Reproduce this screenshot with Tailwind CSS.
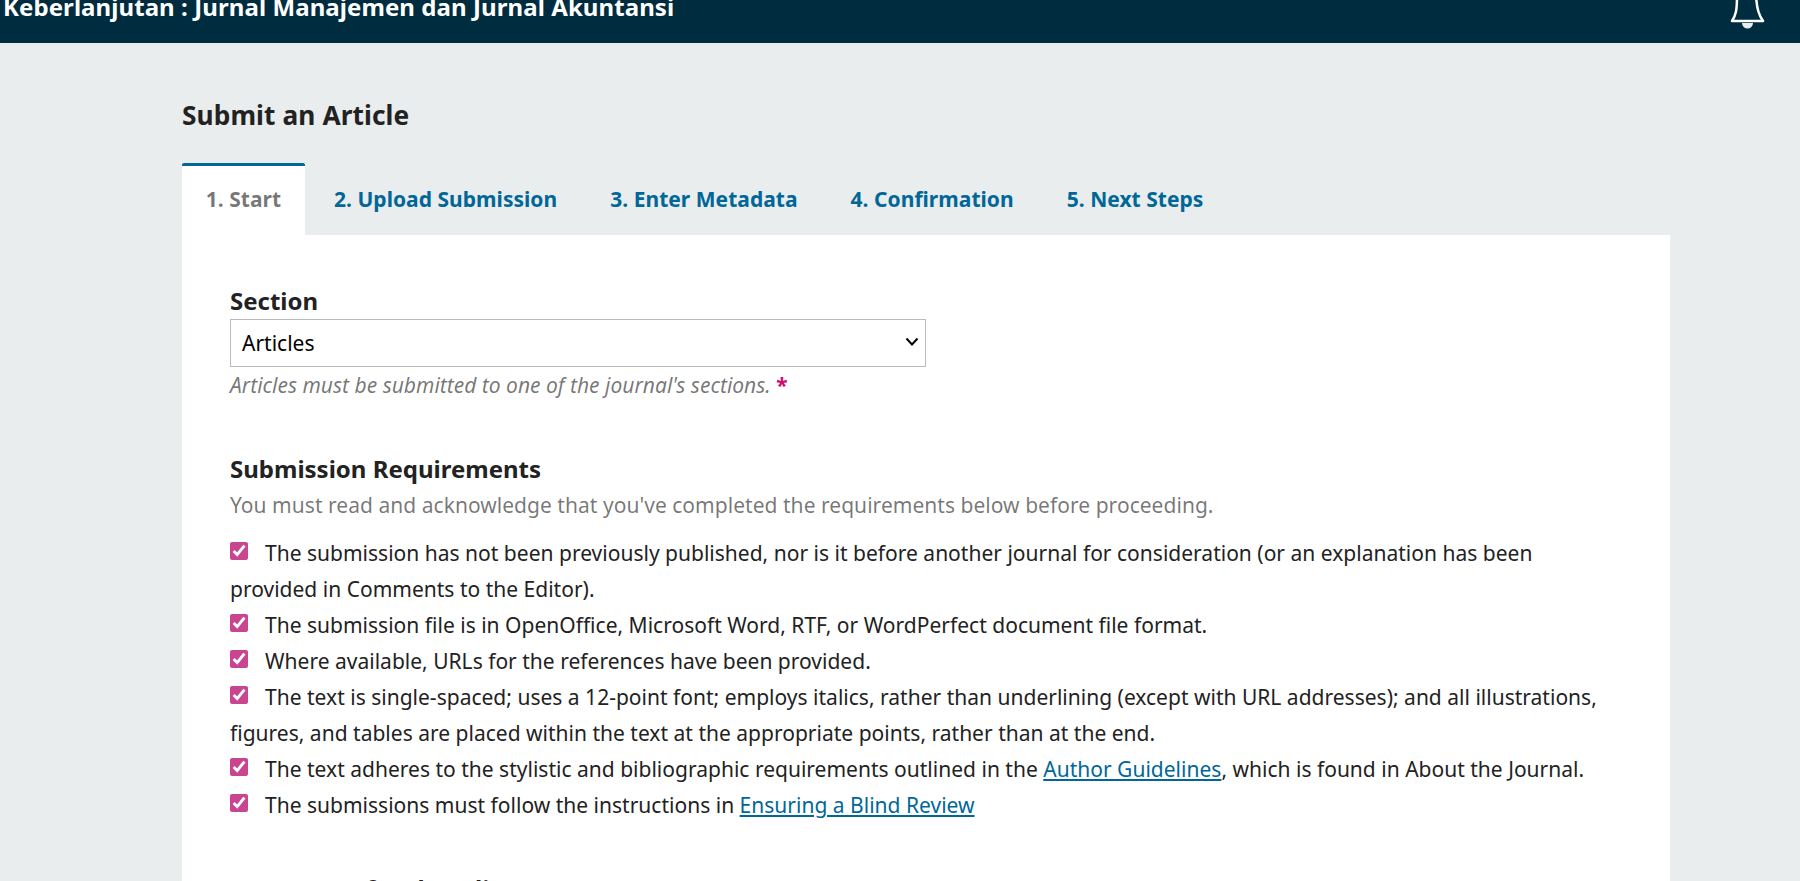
<!DOCTYPE html>
<html lang="en">
<head>
    <meta charset="UTF-8">
    <title>Submit an Article</title>
    <script src="https://cdn.jsdelivr.net/npm/@tailwindcss/browser@4"></script>
</head>
<body class="bg-[#e9edee] font-['Noto_Sans',sans-serif] text-[21px] leading-[36px] text-[#222222] h-[881px] overflow-hidden">
    <!-- Header -->
    <header class="bg-[#002c40] h-[43px] flex justify-between pl-[3px] pr-[33px] overflow-hidden">
        <div class="font-bold text-white text-[24px] leading-[24px] tracking-[0.08px] -mt-[5px]">Keberlanjutan : Jurnal Manajemen dan Jurnal Akuntansi</div>
        <svg class="w-[38px] h-[30px]" viewBox="0 0 38 30" fill="none" stroke="white" stroke-width="2.5" stroke-linejoin="round">
            <path d="M8 -4 C8 10 7 15 3 21 H34 C30 15 28 10 27 -4"/>
            <path d="M13 23 a5 5 0 0 0 11 0 z" fill="#e8eef0" stroke="none"/>
        </svg>
    </header>

    <main class="pl-[182px] pr-[130px]">
        <h1 class="font-bold text-[26.25px] leading-[36px] tracking-[0.1px] pt-[54px] pb-[30px]">Submit an Article</h1>

        <!-- Tabs -->
        <nav class="flex font-bold text-[21px] leading-[24px] tracking-[0.03px]">
            <a class="bg-white border-t-[3px] border-[#006798] rounded-t-[2px] h-[72px] w-[123px] pb-[4px] flex items-center justify-center text-[rgba(0,0,0,0.54)]">1. Start</a>
            <a class="text-[#006798] h-[72px] flex items-center pb-[1px] ml-[29px]">2. Upload Submission</a>
            <a class="text-[#006798] h-[72px] flex items-center pb-[1px] ml-[53px]">3. Enter Metadata</a>
            <a class="text-[#006798] h-[72px] flex items-center pb-[1px] ml-[53px]">4. Confirmation</a>
            <a class="text-[#006798] h-[72px] flex items-center pb-[1px] ml-[53px]">5. Next Steps</a>
        </nav>

        <div class="bg-white px-[48px] pt-[48px] h-[800px]">
            <!-- Section -->
            <label class="block font-bold text-[24px] leading-[36px] h-[36px]">Section</label>
            <div class="relative w-[696px] h-[48px] bg-white border border-[#bbbbbb] flex items-center pl-[11px] text-black">
                Articles
                <svg class="absolute right-[6px] top-[15px] w-[14px] h-[14px]" viewBox="0 0 14 14" fill="none" stroke="black" stroke-width="2"><path d="M1.5 3.5 L7 9.5 L12.5 3.5"/></svg>
            </div>
            <p class="italic text-[rgba(0,0,0,0.54)]">Articles must be submitted to one of the journal's sections. <span class="not-italic font-bold text-[#d00a6c]">*</span></p>

            <!-- Requirements -->
            <h2 class="font-bold text-[24px] leading-[36px] mt-[48px]">Submission Requirements</h2>
            <p class="text-[rgba(0,0,0,0.54)] tracking-[0.035px]">You must read and acknowledge that you've completed the requirements below before proceeding.</p>
            <ul class="mt-[12px] tracking-[0.01px]">
                <li><input type="checkbox" checked class="accent-[#ca4590] w-[18px] h-[18px] mr-[17px] align-[1px]">The submission has not been previously published, nor is it before another journal for consideration (or an explanation has been provided in Comments to the Editor).</li>
                <li><input type="checkbox" checked class="accent-[#ca4590] w-[18px] h-[18px] mr-[17px] align-[1px]">The submission file is in OpenOffice, Microsoft Word, RTF, or WordPerfect document file format.</li>
                <li><input type="checkbox" checked class="accent-[#ca4590] w-[18px] h-[18px] mr-[17px] align-[1px]">Where available, URLs for the references have been provided.</li>
                <li><input type="checkbox" checked class="accent-[#ca4590] w-[18px] h-[18px] mr-[17px] align-[1px]">The text is single-spaced; uses a 12-point font; employs italics, rather than underlining (except with URL addresses); and all illustrations, figures, and tables are placed within the text at the appropriate points, rather than at the end.</li>
                <li><input type="checkbox" checked class="accent-[#ca4590] w-[18px] h-[18px] mr-[17px] align-[1px]">The text adheres to the stylistic and bibliographic requirements outlined in the <a class="text-[#006798] underline">Author Guidelines</a>, which is found in About the Journal.</li>
                <li><input type="checkbox" checked class="accent-[#ca4590] w-[18px] h-[18px] mr-[17px] align-[1px]">The submissions must follow the instructions in <a class="text-[#006798] underline">Ensuring a Blind Review</a></li>
            </ul>

            <h2 class="font-bold text-[24px] leading-[36px] mt-[48px]">Comments for the Editor</h2>
        </div>
    </main>
</body>
</html>
